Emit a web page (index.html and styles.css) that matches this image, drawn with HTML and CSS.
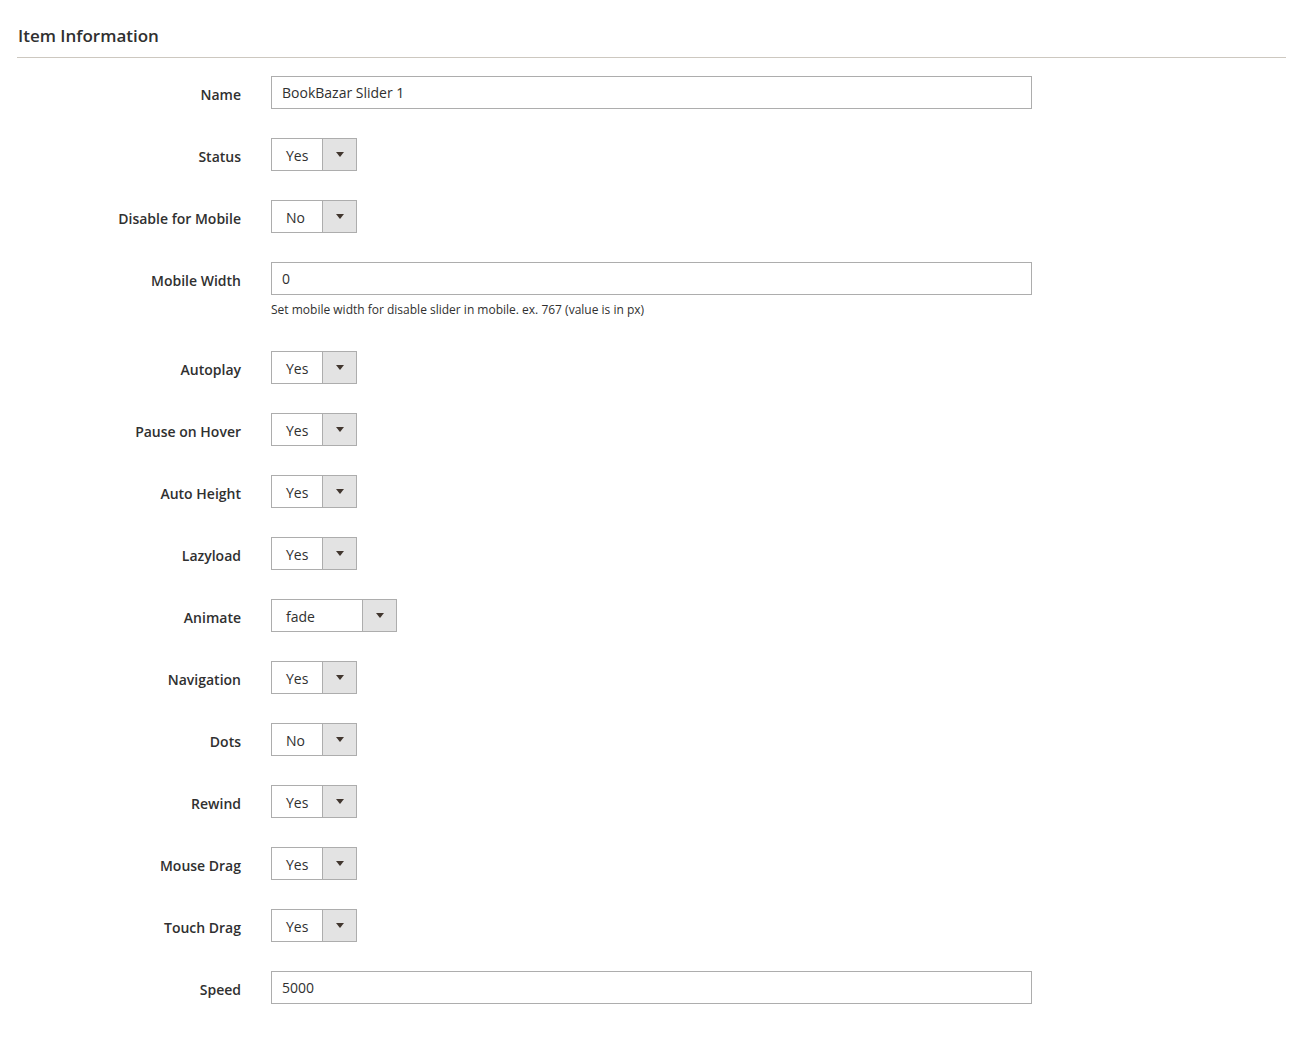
FILE: index.html
```html
<!DOCTYPE html>
<html lang="en">
<head>
    <meta charset="UTF-8">
    <title>Item Information</title>
    <link rel="stylesheet" href="styles.css">
</head>
<body>
    <div class="section">
        <h2 class="section-title">Item Information</h2>
        <div class="fieldset">
            <div class="field">
                <label class="field-label">Name</label>
                <div class="field-control"><input class="text-input" type="text" value="BookBazar Slider 1"></div>
            </div>
            <div class="field">
                <label class="field-label">Status</label>
                <div class="field-control"><div class="select"><span class="select-value">Yes</span><span class="select-btn"><i class="arrow"></i></span></div></div>
            </div>
            <div class="field">
                <label class="field-label">Disable for Mobile</label>
                <div class="field-control"><div class="select"><span class="select-value">No</span><span class="select-btn"><i class="arrow"></i></span></div></div>
            </div>
            <div class="field field-with-note">
                <label class="field-label">Mobile Width</label>
                <div class="field-control">
                    <input class="text-input" type="text" value="0">
                    <div class="note">Set mobile width for disable slider in mobile. ex. 767 (value is in px)</div>
                </div>
            </div>
            <div class="field">
                <label class="field-label">Autoplay</label>
                <div class="field-control"><div class="select"><span class="select-value">Yes</span><span class="select-btn"><i class="arrow"></i></span></div></div>
            </div>
            <div class="field">
                <label class="field-label">Pause on Hover</label>
                <div class="field-control"><div class="select"><span class="select-value">Yes</span><span class="select-btn"><i class="arrow"></i></span></div></div>
            </div>
            <div class="field">
                <label class="field-label">Auto Height</label>
                <div class="field-control"><div class="select"><span class="select-value">Yes</span><span class="select-btn"><i class="arrow"></i></span></div></div>
            </div>
            <div class="field">
                <label class="field-label">Lazyload</label>
                <div class="field-control"><div class="select"><span class="select-value">Yes</span><span class="select-btn"><i class="arrow"></i></span></div></div>
            </div>
            <div class="field">
                <label class="field-label">Animate</label>
                <div class="field-control"><div class="select select-wide"><span class="select-value">fade</span><span class="select-btn"><i class="arrow"></i></span></div></div>
            </div>
            <div class="field">
                <label class="field-label">Navigation</label>
                <div class="field-control"><div class="select"><span class="select-value">Yes</span><span class="select-btn"><i class="arrow"></i></span></div></div>
            </div>
            <div class="field">
                <label class="field-label">Dots</label>
                <div class="field-control"><div class="select"><span class="select-value">No</span><span class="select-btn"><i class="arrow"></i></span></div></div>
            </div>
            <div class="field">
                <label class="field-label">Rewind</label>
                <div class="field-control"><div class="select"><span class="select-value">Yes</span><span class="select-btn"><i class="arrow"></i></span></div></div>
            </div>
            <div class="field">
                <label class="field-label">Mouse Drag</label>
                <div class="field-control"><div class="select"><span class="select-value">Yes</span><span class="select-btn"><i class="arrow"></i></span></div></div>
            </div>
            <div class="field">
                <label class="field-label">Touch Drag</label>
                <div class="field-control"><div class="select"><span class="select-value">Yes</span><span class="select-btn"><i class="arrow"></i></span></div></div>
            </div>
            <div class="field">
                <label class="field-label">Speed</label>
                <div class="field-control"><input class="text-input" type="text" value="5000"></div>
            </div>
        </div>
    </div>
</body>
</html>
```

FILE: styles.css
```css
body {
    margin: 0;
    background-color: #ffffff;
    font-family: 'Open Sans', 'Liberation Sans', sans-serif;
    color: #303030;
}
.section {
    padding: 0 19px 0 17px;
}
.section-title {
    margin: 0;
    padding: 24px 0 9px 1px;
    font-size: 17px;
    font-weight: 600;
    line-height: 24px;
    color: #303030;
    border-bottom: 1px solid #cdc8c0;
}
.fieldset {
    padding-top: 18px;
}
.field {
    display: flex;
    margin-bottom: 29px;
}
.field-with-note {
    margin-bottom: 32px;
}
.field-label {
    width: 254px;
    flex-shrink: 0;
    padding-right: 30px;
    box-sizing: border-box;
    text-align: right;
    font-size: 14px;
    font-weight: 600;
    line-height: 20px;
    padding-top: 9px;
    color: #303030;
}
.field-control {
    width: 761px;
}
.text-input {
    display: block;
    width: 761px;
    height: 33px;
    box-sizing: border-box;
    border: 1px solid #adadad;
    padding: 0 10px;
    font-family: inherit;
    font-size: 14px;
    color: #303030;
    background: #fff;
    outline: none;
}
.note {
    margin-top: 6px;
    font-size: 12px;
    line-height: 18px;
    color: #303030;
}
.select {
    display: flex;
    width: 86px;
    height: 33px;
    box-sizing: border-box;
    border: 1px solid #adadad;
    background: #fff;
}
.select-wide {
    width: 126px;
}
.select-value {
    flex: 1;
    padding: 2px 0 0 14px;
    font-size: 14px;
    line-height: 29px;
}
.select-btn {
    width: 33px;
    border-left: 1px solid #adadad;
    background: #e3e3e3;
    display: flex;
    align-items: center;
    justify-content: center;
}
.arrow {
    width: 0;
    height: 0;
    border-left: 4px solid transparent;
    border-right: 4px solid transparent;
    border-top: 5px solid #41362f;
}
```
